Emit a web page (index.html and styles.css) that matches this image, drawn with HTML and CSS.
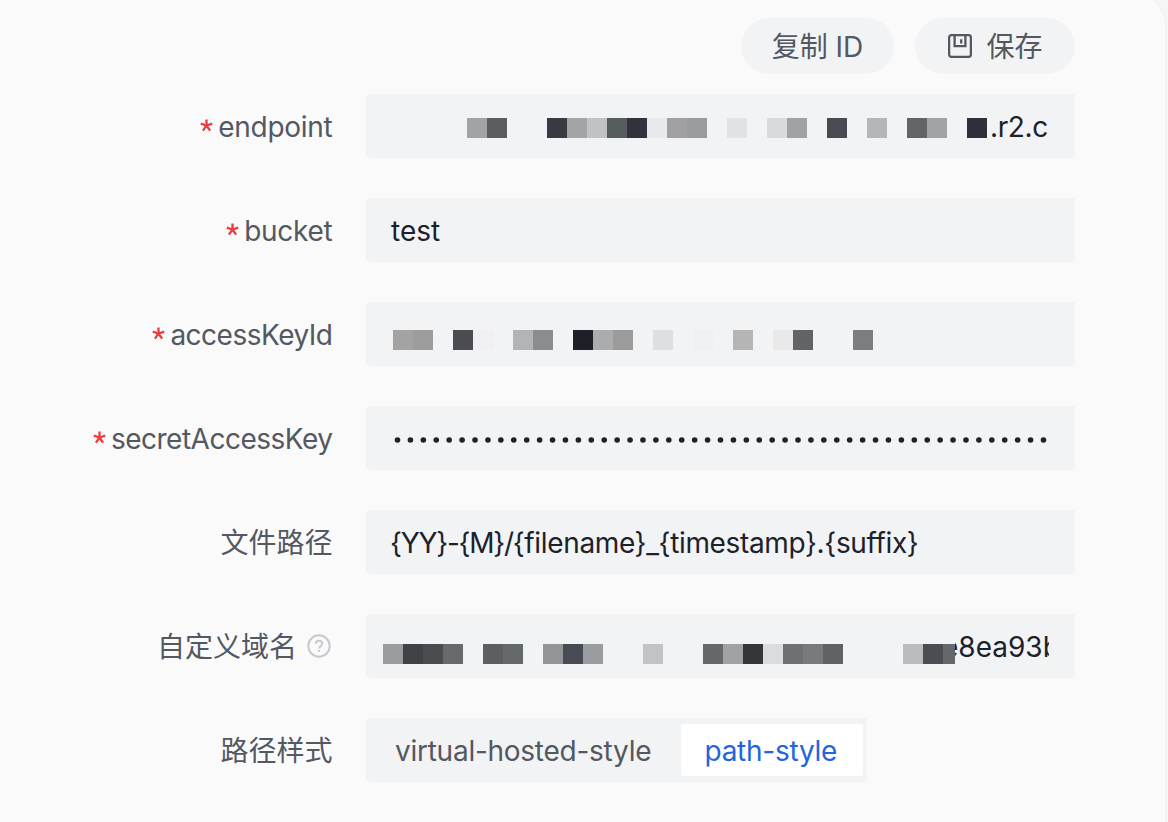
FILE: index.html
```html
<!DOCTYPE html>
<html lang="zh-CN">
<head>
<meta charset="utf-8">
<title>R2</title>
<link rel="stylesheet" href="styles.css">
</head>
<body>
<svg class="defs" width="0" height="0" aria-hidden="true">
  <symbol id="star" viewBox="0 0 12 12"><path d="M6 6V.4M6 6 .7 4.3M6 6l5.3-1.7M6 6l-3.3 4.8M6 6l3.3 4.8" stroke="currentColor" stroke-width="2.1" fill="none"/></symbol>
</svg>
<main class="panel">
  <header class="toolbar">
    <button class="pill copy">复制 ID</button>
    <button class="pill save">
      <svg class="save-icon" viewBox="0 0 24 24" fill="none" stroke="currentColor" stroke-width="2.3"><rect x="1.1" y="1.1" width="21.8" height="21.8" rx="2.5"/><path d="M6.6 1.2v10.9h10.8V1.2M13.2 5.2v4.2"/></svg>
      <span>保存</span>
    </button>
  </header>
  <form class="form">
    <div class="row">
      <label class="label"><svg class="star"><use href="#star"/></svg><span class="name">endpoint</span></label>
      <div class="field endpoint">
        <svg class="mosaic" width="520" height="20" shape-rendering="crispEdges">
          <rect width="20" height="20" x="0" fill="#a2a3a4"/><rect width="20" height="20" x="20" fill="#5b5e61"/>
          <rect width="20" height="20" x="80" fill="#383a42"/><rect width="20" height="20" x="100" fill="#a3a4a5"/><rect width="20" height="20" x="120" fill="#c1c2c6"/><rect width="20" height="20" x="140" fill="#565b5e"/><rect width="20" height="20" x="160" fill="#31333c"/><rect width="20" height="20" x="180" fill="#e8e9ec"/><rect width="20" height="20" x="200" fill="#a0a0a2"/><rect width="20" height="20" x="220" fill="#9a9b9d"/>
          <rect width="20" height="20" x="260" fill="#e1e2e3"/><rect width="20" height="20" x="300" fill="#d9dadc"/><rect width="20" height="20" x="320" fill="#a1a2a4"/><rect width="20" height="20" x="360" fill="#484b4f"/><rect width="20" height="20" x="400" fill="#b5b6b8"/><rect width="20" height="20" x="440" fill="#626468"/><rect width="20" height="20" x="460" fill="#a1a3a5"/><rect width="20" height="20" x="500" fill="#2d3038"/>
        </svg>
        <span class="tail">.r2.c</span>
      </div>
    </div>
    <div class="row">
      <label class="label"><svg class="star"><use href="#star"/></svg><span class="name">bucket</span></label>
      <div class="field">test</div>
    </div>
    <div class="row">
      <label class="label"><svg class="star"><use href="#star"/></svg><span class="name tight">accessKeyId</span></label>
      <div class="field access">
        <svg class="mosaic" width="480" height="20" shape-rendering="crispEdges">
          <rect width="20" height="20" x="0" fill="#a3a3a4"/><rect width="20" height="20" x="20" fill="#9d9d9e"/><rect width="20" height="20" x="60" fill="#4b4c51"/><rect width="20" height="20" x="80" fill="#f0f0f3"/><rect width="20" height="20" x="120" fill="#b3b4b5"/><rect width="20" height="20" x="140" fill="#8b8c8e"/><rect width="20" height="20" x="180" fill="#1e2027"/><rect width="20" height="20" x="200" fill="#aaacad"/><rect width="20" height="20" x="220" fill="#9b9b9c"/><rect width="20" height="20" x="260" fill="#dedfe0"/><rect width="20" height="20" x="300" fill="#eff0f2"/><rect width="20" height="20" x="340" fill="#b5b5b6"/><rect width="20" height="20" x="380" fill="#e9e9ea"/><rect width="20" height="20" x="400" fill="#626366"/><rect width="20" height="20" x="460" fill="#7b7d7e"/>
        </svg>
      </div>
    </div>
    <div class="row">
      <label class="label"><svg class="star"><use href="#star"/></svg><span class="name tight">secretAccessKey</span></label>
      <div class="field secret">
        <svg width="660" height="8"><path d="M3.5 4H652" stroke="#1d2129" stroke-width="5.6" stroke-linecap="round" stroke-dasharray="0 12.92"/></svg>
      </div>
    </div>
    <div class="row">
      <label class="label"><span>文件路径</span></label>
      <div class="field path"><span class="dir">{YY}-{M}/</span><span>{filename}_{timestamp}.{suffix}</span></div>
    </div>
    <div class="row">
      <label class="label"><span>自定义域名</span><svg class="help" viewBox="0 0 24 24" fill="none" stroke="#c6c9ce" stroke-width="2"><circle cx="12" cy="12" r="10.7"/><path d="M8.8 9.8c0-4.2 6.5-4 6.5-.2 0 2.3-3.2 2.4-3.2 4.8M12.1 16v2"/></svg></label>
      <div class="field domain">
        <svg class="mosaic" width="572" height="20" shape-rendering="crispEdges">
          <rect width="20" height="20" x="0" fill="#9b9c9e"/><rect width="20" height="20" x="20" fill="#3f4347"/><rect width="20" height="20" x="40" fill="#4b4c50"/><rect width="20" height="20" x="60" fill="#68696d"/><rect width="20" height="20" x="100" fill="#5d5e62"/><rect width="20" height="20" x="120" fill="#646a6b"/><rect width="20" height="20" x="160" fill="#949596"/><rect width="20" height="20" x="180" fill="#474b54"/><rect width="20" height="20" x="200" fill="#9a9da0"/><rect width="20" height="20" x="260" fill="#c2c3c6"/><rect width="20" height="20" x="320" fill="#66676b"/><rect width="20" height="20" x="340" fill="#a1a2a4"/><rect width="20" height="20" x="360" fill="#35363a"/><rect width="20" height="20" x="380" fill="#dbdcde"/><rect width="20" height="20" x="400" fill="#6f7074"/><rect width="20" height="20" x="420" fill="#797a7d"/><rect width="20" height="20" x="440" fill="#616266"/><rect width="20" height="20" x="520" fill="#bbbcbe"/><rect width="20" height="20" x="540" fill="#4c4d53"/><rect width="12" height="20" x="560" fill="#66676b"/>
        </svg>
        <span class="tail-clip"><span class="tail-text">e8ea93b</span></span>
      </div>
    </div>
    <div class="row">
      <label class="label"><span>路径样式</span></label>
      <div class="segmented"><span class="seg">virtual-hosted-style</span><span class="seg active">path-style</span></div>
    </div>
  </form>
</main>
</body>
</html>
```

FILE: styles.css
```css
* { box-sizing: border-box; }
body {
  margin: 0;
  height: 822px;
  overflow: hidden;
  background: #f5f5f6;
  font: 28px/40px Inter, "Noto Sans CJK SC", sans-serif;
  color: #1d2129;
}
.defs { display: block; }
.panel {
  width: 1166px;
  height: 842px;
  margin-top: -4px;
  padding: 22px 90px 0 0;
  background: #fafafa;
  border-right: 1px solid #eeeff0;
  border-radius: 0 28px 0 0;
}
.toolbar { display: flex; justify-content: flex-end; gap: 21px; }
.pill {
  display: flex;
  align-items: center;
  justify-content: center;
  height: 56px;
  padding: 1px 0 0;
  border: 0;
  border-radius: 28px;
  background: #f2f3f5;
  color: #535861;
  font: inherit;
}
.copy { width: 153px; }
.save { width: 160px; gap: 14px; padding-left: 1px; }
.save-icon { width: 24px; height: 24px; margin-top: -1px; }
.form { display: grid; gap: 40px; margin-top: 20px; }
.row { display: grid; grid-template-columns: 333px 709px; column-gap: 33px; height: 64px; margin-right: -1px; }
.label {
  display: flex;
  align-items: center;
  justify-content: flex-end;
  padding-right: .5px;
  color: #535861;
}
.label span { padding-top: 1px; }
.name { letter-spacing: -.27px; }
.name.tight { letter-spacing: -.5px; }
.star { width: 13px; height: 13px; margin-right: 5px; margin-top: -2px; color: #f0393c; }
.help { width: 24px; height: 24px; margin-left: 10px; margin-right: 1.5px; }
.field {
  display: flex;
  align-items: center;
  height: 64px;
  padding-top: 1px;
  padding-left: 25px;
  border-radius: 4px;
  background: #f2f3f5;
  white-space: nowrap;
}
.mosaic { flex: none; }
.endpoint { padding-left: 101px; }
.endpoint .mosaic { margin-top: 3px; }
.tail { margin-left: 3px; letter-spacing: -.4px; }
.access { padding-left: 27px; }
.access .mosaic { margin-top: 11px; }
.secret { padding-left: 28px; padding-top: 4px; }
.path { padding-left: 24px; letter-spacing: -.35px; }
.dir { letter-spacing: -1.25px; }
.domain { padding-left: 17px; }
.domain .mosaic { margin-top: 15px; }
.tail-clip { width: 94px; overflow: hidden; }
.tail-text { display: block; margin-left: -13px; }
.segmented {
  display: flex;
  width: 501px;
  height: 64px;
  padding: 6px 4px 6px 5px;
  border-radius: 4px;
  background: #f2f3f5;
}
.seg { display: flex; align-items: center; padding: 1px 24px 0; border-radius: 3px; color: #535861; white-space: nowrap; letter-spacing: -.26px; }
.seg.active { width: 182px; margin-left: auto; padding-left: 23.5px; background: #fff; color: #2464dc; }
```
